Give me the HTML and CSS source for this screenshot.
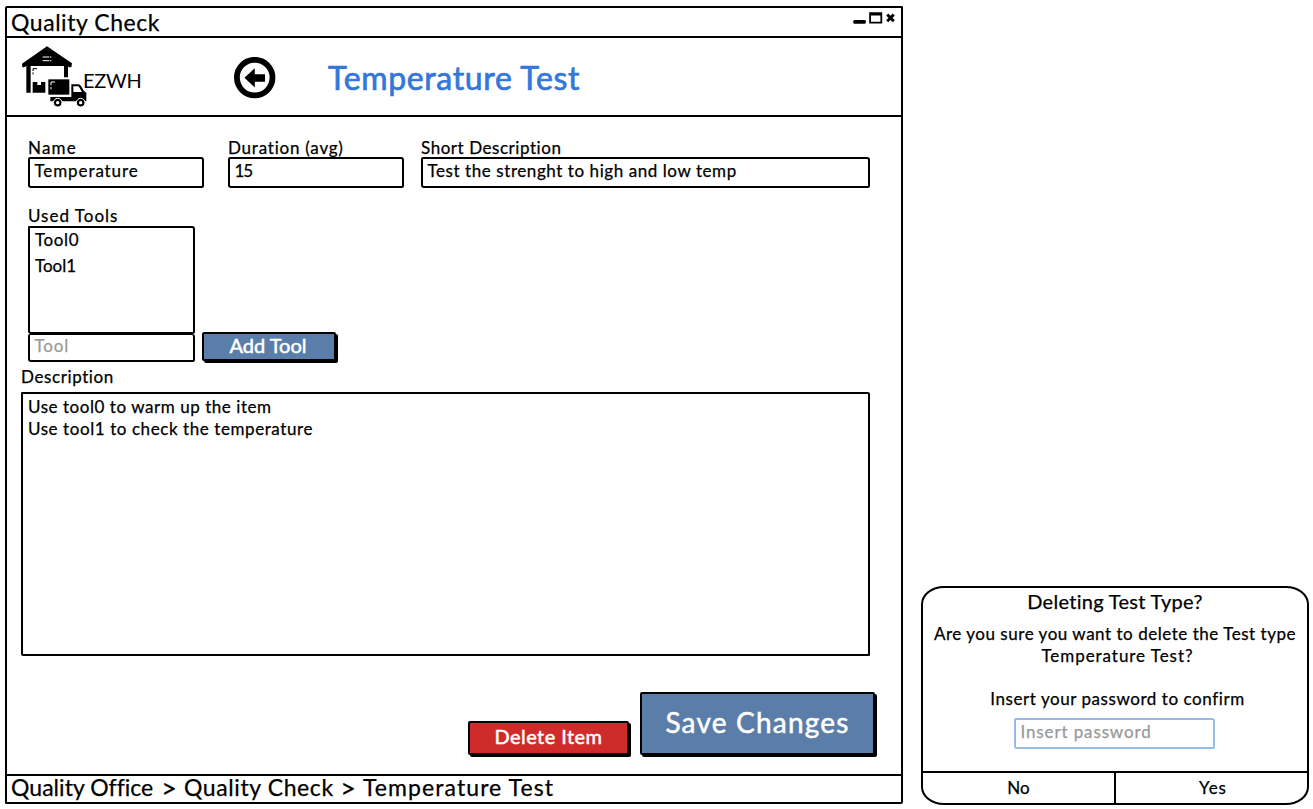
FILE: index.html
```html
<!DOCTYPE html>
<html lang="en">
<head>
<meta charset="utf-8">
<title>Quality Check</title>
<link rel="stylesheet" href="styles.css">
</head>
<body>
<div class="window">
  <div class="titlebar">
    <span class="window-title">Quality Check</span>
    <svg class="controls" width="42" height="12" viewBox="0 0 42 12">
      <rect x="0.3" y="8" width="12.5" height="3.8" rx="1.2"/>
      <path fill-rule="evenodd" d="M16.2 0.2h13v11.3H16.2zM18 3.6v6.1h9.4V3.6z"/>
      <path d="M34.2 2.4l6.6 6.9M40.8 2.4l-6.6 6.9" stroke="#000" stroke-width="2.9"/>
    </svg>
  </div>
  <header class="header">
    <svg class="logo" width="65" height="62" viewBox="20 18 195 186">
      <path d="M95 19L170 70L168 82H160L158 78V112H146V78H46V158H33V78L26 82H21L20 71z"/>
      <path d="M82 51H108M82 62H108" stroke="#fff" stroke-width="3" stroke-dasharray="20 2 4"/>
      <path d="M53 103V97M53 93V86H65" fill="none" stroke="#000" stroke-width="3"/>
      <path d="M52 126H66V135H77V126H90V158H52z"/>
      <path d="M99 118H162V164H99z"/>
      <path d="M107 148V141M107 136V126H119" fill="none" stroke="#fff" stroke-width="3"/>
      <path fill-rule="evenodd" d="M168 133H189Q194 133 197 138L206 153L213 158V184H105V171H168zM174 139V156H200L191 141Q190 139 188 139z"/>
      <circle cx="127" cy="188" r="13" stroke="#fff" stroke-width="3"/>
      <circle cx="127" cy="188" r="5" fill="#fff"/>
      <circle cx="196" cy="188" r="13" stroke="#fff" stroke-width="3"/>
      <circle cx="196" cy="188" r="5" fill="#fff"/>
    </svg>
    <span class="brand">EZWH</span>
    <svg class="back" width="42" height="42" viewBox="0 0 42 42">
      <circle cx="20.7" cy="20.6" r="17.8" fill="none" stroke="#000" stroke-width="5.8"/>
      <path d="M10.4 20.8L20.8 11.3V17.3H31V24.7H20.8V30.4z"/>
    </svg>
    <h1 class="page-title">Temperature Test</h1>
  </header>
  <main class="content">
    <div class="fields">
      <div><div class="label t-name">Name</div><div class="input t-temp">Temperature</div></div>
      <div><div class="label t-duration">Duration (avg)</div><div class="input t-num">15</div></div>
      <div><div class="label t-short">Short Description</div><div class="input t-test">Test the strenght to high and low temp</div></div>
    </div>
    <div class="tools">
      <div class="tool-col">
        <div class="label t-used">Used Tools</div>
        <ul class="list"><li class="t-tool0">Tool0</li><li>Tool1</li></ul>
        <div class="input tool-input">Tool</div>
      </div>
      <div class="button add">Add Tool</div>
    </div>
    <div class="label t-desc">Description</div>
    <div class="textarea"><p class="t-line1">Use tool0 to warm up the item</p><p class="t-line2">Use tool1 to check the temperature</p></div>
    <div class="actions">
      <div class="button delete">Delete Item</div>
      <div class="button save">Save Changes</div>
    </div>
  </main>
  <footer class="crumbs"><span class="crumb office">Quality Office</span><span class="sep">&gt;</span><span class="crumb check">Quality Check</span><span class="sep">&gt;</span><span class="crumb test">Temperature Test</span></footer>
</div>
<section class="dialog">
  <div class="dialog-body">
    <h2 class="dialog-title">Deleting Test Type?</h2>
    <p class="ask">Are you sure you want to delete the Test type</p>
    <p class="ask-name">Temperature Test?</p>
    <p class="confirm">Insert your password to confirm</p>
    <div class="input password">Insert password</div>
  </div>
  <div class="choices"><div class="no">No</div><div class="yes">Yes</div></div>
</section>
</body>
</html>
```
FILE: styles.css
```css
* { box-sizing: border-box; margin: 0; padding: 0; }
body {
  width: 1313px; height: 809px; padding: 6px 0 0 5px; overflow: hidden;
  display: flex; align-items: flex-start; background: #fff; color: #000;
  font-family: Lato, "Open Sans", sans-serif; font-size: 17px; font-weight: 400;
  font-variant-ligatures: none;
  -webkit-text-stroke: 0.25px currentColor; white-space: nowrap;
}
svg { display: block; flex: none; }
.window {
  width: 898px; height: 798px; flex: none; display: flex; flex-direction: column;
  border: 2px solid #000; border-radius: 2px 1px 2px 1px;
}
.titlebar {
  height: 30px; flex: none; display: flex; justify-content: space-between;
  padding: 0 6px 0 4px; border-bottom: 2px solid #000;
}
.window-title { font-size: 23px; line-height: 29px; letter-spacing: 0.55px; }
.controls { margin-top: 4px; }
.header {
  height: 79px; flex: none; display: flex; align-items: flex-start;
  padding-left: 15px; border-bottom: 2px solid #000;
}
.logo { margin-top: 8px; }
.brand { width: 150px; margin: 30px 0 0 -4px; font-size: 20px; line-height: 24px; letter-spacing: -0.3px; -webkit-text-stroke-width: 0; }
.back { margin: 19px 0 0 1px; }
.page-title {
  margin: 20px 0 0 52px; font-size: 32px; line-height: 39px; font-weight: 400;
  letter-spacing: 0.65px; color: #3477db; -webkit-text-stroke-width: 0.7px;
}
.content { flex: 1; padding: 21px 0 0 14px; }
.fields { display: grid; grid-template-columns: 176px 176px 449px; column-gap: 24px; padding-left: 7px; }
.fields > :last-child { margin-left: -7px; width: 449px; }
.label { height: 19px; line-height: 19px; }
.input {
  height: 31px; padding-left: 4.5px; line-height: 24px; background: #fff;
  border: 2px solid #000; border-radius: 2px 3px 2px 3px; position: relative;
}
.t-name { letter-spacing: 1.2px; }
.t-duration { letter-spacing: 0.78px; }
.t-short { letter-spacing: 0.55px; }
.t-temp { letter-spacing: 0.9px; }
.t-num { letter-spacing: -1px; }
.t-test { letter-spacing: 0.57px; }
.t-used { letter-spacing: 1px; line-height: 17px; }
.t-tool0 { letter-spacing: 0.6px; }
.t-line1 { letter-spacing: 0.55px; }
.t-line2 { letter-spacing: 0.58px; }
.tools { display: flex; align-items: flex-end; gap: 7px; padding: 19px 0 0 7px; }
.tool-col { width: 167px; }
.list { height: 108px; list-style: none; border: 2px solid #000; border-radius: 1px 3px 2px 3px; padding-left: 5px; }
.list li { height: 26px; line-height: 24px; }
.tool-input { height: 28px; line-height: 22px; color: #999; border-top-width: 1px; letter-spacing: 0.8px; }
.button {
  border: 2px solid #000; border-radius: 2px; box-shadow: 2px 2px 0 #000;
  color: #fff; text-align: center; background: #5a7ea9; -webkit-text-stroke-width: 0.5px;
}
.add { width: 134px; height: 29px; margin-bottom: 1px; font-size: 20px; line-height: 23px; padding-right: 2px; }
.t-desc { height: 30px; line-height: 30px; letter-spacing: 0.6px; }
.textarea { width: 849px; height: 264px; border: 2px solid #000; border-radius: 1px 2px; padding: 2px 0 0 5px; line-height: 22px; }
.actions { display: flex; align-items: flex-end; gap: 11px; padding: 36px 0 0 447px; }
.delete { width: 161px; height: 34px; background: #ce2b2a; font-size: 20px; line-height: 27px; letter-spacing: 0.45px; }
.save { width: 235px; height: 63px; font-size: 28px; line-height: 56px; letter-spacing: 1.2px; }
.crumbs { height: 28px; flex: none; display: flex; border-top: 2px solid #000; padding-left: 4px; font-size: 23px; line-height: 23px; }
.office { width: 143px; letter-spacing: 0.04px; }
.check { width: 149px; letter-spacing: 0.6px; }
.test { letter-spacing: 1.08px; }
.sep { width: 30px; font-size: 27px; text-align: center; }
.dialog {
  width: 388px; height: 219px; margin: 580px 0 0 18px; flex: none;
  border: 2px solid #000; border-radius: 23px / 18px; overflow: hidden;
}
.dialog-body { height: 185px; display: flex; flex-direction: column; align-items: center; border-bottom: 2px solid #000; }
.dialog-title { font-size: 20px; line-height: 27px; font-weight: 400; margin-bottom: 8px; letter-spacing: 0.3px; }
.ask, .ask-name { line-height: 22px; letter-spacing: 0.53px; }
.ask-name { letter-spacing: 0.94px; padding-left: 5px; }
.confirm { line-height: 22px; margin: 21px 0 8px; letter-spacing: 0.56px; padding-left: 5px; }
.password { width: 201px; margin-right: 2px; padding-left: 5px; border-color: #97bbe9; color: #999; letter-spacing: 0.87px; }
.choices { display: flex; height: 30px; line-height: 29px; text-align: center; }
.no { width: 193px; border-right: 2px solid #000; }
.yes { flex: 1; letter-spacing: 0.9px; padding-left: 3px; }
```
